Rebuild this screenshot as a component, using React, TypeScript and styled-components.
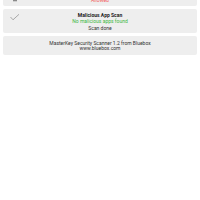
import React from "react";
import styled, { createGlobalStyle } from "styled-components";

const Global = createGlobalStyle`
  html, body { margin: 0; padding: 0; background: #ffffff; }
  body { font-family: Roboto, "Liberation Sans", sans-serif; }
`;

const Page = styled.div`
  width: 200px;
  height: 200px;
  overflow: hidden;
  background: #ffffff;
`;

const List = styled.div`
  display: flex;
  flex-direction: column;
  gap: 3.5px;
  padding: 0 3px;
  margin-top: -3.5px;
`;

const Card = styled.div<{ $pt: number; $pb: number; $lh: number }>`
  position: relative;
  background: #eeeeee;
  border-radius: 2px;
  padding: ${(p) => p.$pt}px 4px ${(p) => p.$pb}px;
  display: flex;
  flex-direction: column;
  align-items: center;
  font-size: 5px;
  line-height: ${(p) => p.$lh}px;
  color: #333333;
`;

const Title = styled.div`
  font-weight: 700;
  color: #222222;
`;

const Status = styled.div<{ $tone: "good" | "bad" }>`
  color: ${(p) => (p.$tone === "good" ? "#3db843" : "#f25a5a")};
`;

const Line = styled.div`
  color: #333333;
`;

const IconSlot = styled.div<{ $top: number }>`
  position: absolute;
  left: 7px;
  top: ${(p) => p.$top}px;
  width: 10px;
  height: 7px;
  display: flex;
`;

const Check = () => (
  <svg width="10" height="7" viewBox="0 0 10 7">
    <path d="M0.5 3 L3 5.8 L9 0.3" fill="none" stroke="#8a8a8a" strokeWidth="0.7" />
  </svg>
);

const Shield = () => (
  <svg width="10" height="7" viewBox="0 0 10 7">
    <rect x="3" y="0" width="4" height="1.3" fill="#8a8a8a" />
  </svg>
);

export default function App() {
  return (
    <Page>
      <Global />
      <List>
        <Card $pt={0} $pb={2.5} $lh={6.5}>
          <IconSlot $top={3.5}>
            <Shield />
          </IconSlot>
          <Status $tone="bad">Allowed</Status>
        </Card>
        <Card $pt={2.5} $pb={1.5} $lh={6.5}>
          <IconSlot $top={4.5}>
            <Check />
          </IconSlot>
          <Title>Malicious App Scan</Title>
          <Status $tone="good">No malicious apps found</Status>
          <Line>Scan done</Line>
        </Card>
        <Card $pt={4.5} $pb={3.5} $lh={5.5}>
          <Line>MasterKey Security Scanner 1.2 from Bluebox</Line>
          <Line>www.bluebox.com</Line>
        </Card>
      </List>
    </Page>
  );
}
